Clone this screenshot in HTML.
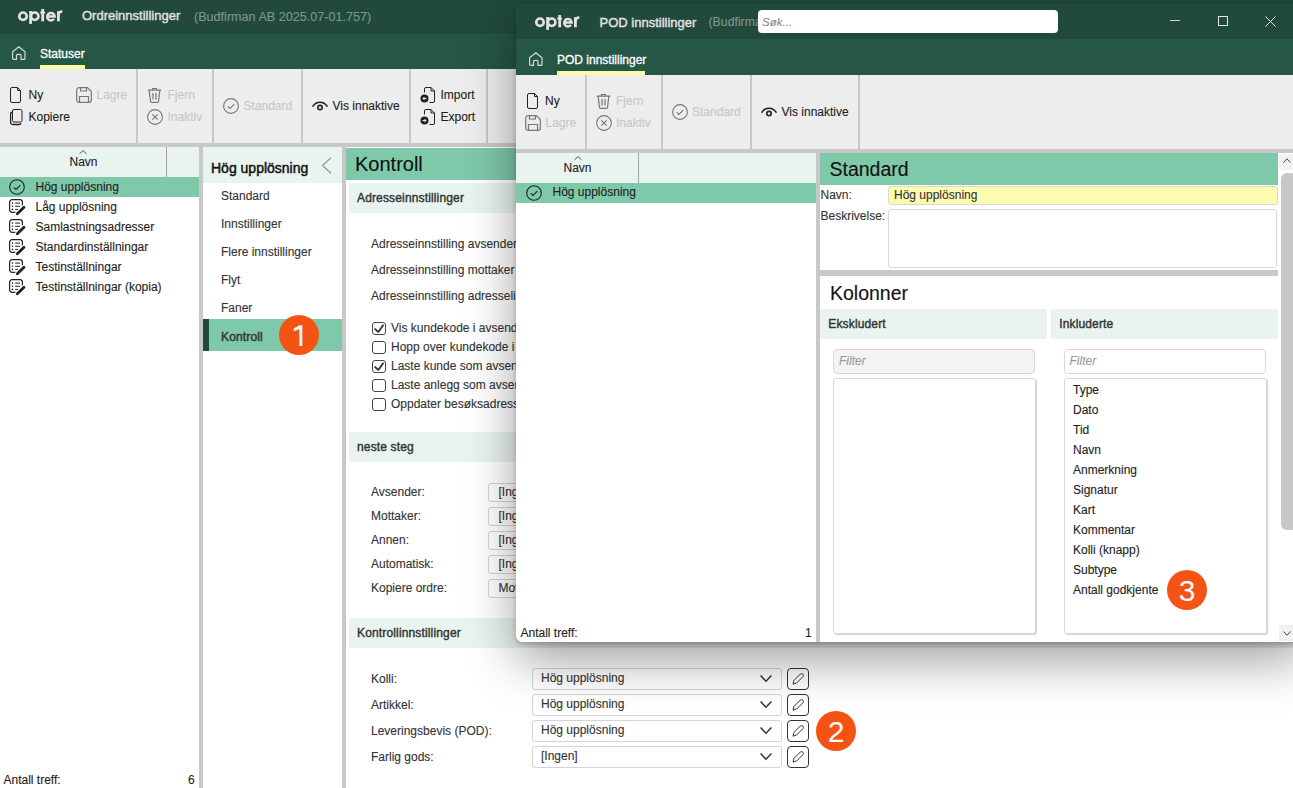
<!DOCTYPE html>
<html><head><meta charset="utf-8">
<style>
*{box-sizing:border-box;margin:0;padding:0}
html,body{width:1293px;height:788px;overflow:hidden;background:#fff;font-family:"Liberation Sans",sans-serif;font-size:12px;color:#1e1e1e}
.a{position:absolute}
.t{position:absolute;white-space:nowrap;line-height:16px;font-size:12px}
.b{font-weight:700}
.t{-webkit-text-stroke:0.12px currentColor}
.t.m{font-weight:400;-webkit-text-stroke:0.4px currentColor;letter-spacing:0.15px}
.sep{position:absolute;background:#c9c8c8}
.dis{color:#c8c8c8}
svg{position:absolute;overflow:visible}
.cb{position:absolute;width:14px;height:13px;border:1px solid #454545;border-radius:3px;background:#fff}
.dd{position:absolute;border:1px solid #d4d4d4;border-radius:3px;background:#fff}
.badge{position:absolute;width:40px;height:40px;border-radius:50%;background:#f55314;color:#fff;font-size:30px;line-height:42px;text-align:center}
</style></head><body>

<!-- ============ MAIN WINDOW ============ -->
<div class="a" style="left:0;top:0;width:1293px;height:34px;background:#214a3c"></div>
<svg style="left:14px;top:4px" width="56" height="26" viewBox="14 4 56 26"><g fill="none" stroke="#e5e2e2" stroke-width="2.6"><circle cx="23" cy="16.2" r="3.75"/><circle cx="34.7" cy="16.2" r="3.75"/><path d="M30.6 11v12.9" stroke-width="2.8"/><path d="M42.7 9v12.3" stroke-width="2.8"/><path d="M40.2 12.6h4.9" stroke-width="1.9"/><path d="M47.6 16.5h7.1A3.75 3.75 0 1 0 54 18.9" stroke-width="2.4"/><path d="M58.4 11.2v10.1" stroke-width="2.8"/><path d="M58.4 15.5Q58.6 11.6 62.3 11.6" stroke-width="2.5"/></g></svg>
<div class="t m" style="left:82px;top:8px;font-size:13px;color:#e2e2e2;-webkit-text-stroke:0.4px #e2e2e2;letter-spacing:0">Ordreinnstillinger</div>
<div class="t" style="left:194px;top:9px;font-size:12.6px;color:#7d978d">(Budfirman AB 2025.07-01.757)</div>

<div class="a" style="left:0;top:34px;width:1293px;height:35px;background:#255646"></div>
<svg style="left:12px;top:46px" width="14" height="14" viewBox="0 0 14 14"><path d="M4.5 13.4H1.6a1 1 0 0 1-1-1V5.7L6.8.7 13 5.7v6.7a1 1 0 0 1-1 1H9V9.4a1 1 0 0 0-1-1H5.5a1 1 0 0 0-1 1z" fill="none" stroke="#d4d8d6" stroke-width="1.2" stroke-linejoin="round"/></svg>
<div class="t" style="left:40px;top:46px;color:#fff;-webkit-text-stroke:0.3px #fff">Statuser</div>
<div class="a" style="left:40px;top:65px;width:45px;height:4px;background:#fbfaa6"></div>

<!-- toolbar -->
<div class="a" style="left:0;top:69px;width:1293px;height:74px;background:#ededed"></div>
<div class="sep" style="left:136px;top:69px;width:2px;height:74px"></div>
<div class="sep" style="left:212px;top:69px;width:2px;height:74px"></div>
<div class="sep" style="left:301px;top:69px;width:2px;height:74px"></div>
<div class="sep" style="left:409px;top:69px;width:2px;height:74px"></div>
<div class="sep" style="left:486px;top:69px;width:2px;height:74px"></div>

<!-- Ny -->
<svg style="left:10px;top:87px" width="11" height="16" viewBox="0 0 11 16"><path d="M2 .5h5.5L10.5 3.5V14a1.5 1.5 0 0 1-1.5 1.5H2A1.5 1.5 0 0 1 .5 14V2A1.5 1.5 0 0 1 2 .5z M7.5 .5V3.5h3" fill="none" stroke="#222" stroke-width="1"/></svg>
<div class="t" style="left:28.5px;top:86.5px">Ny</div>
<svg style="left:10px;top:109px" width="13" height="16" viewBox="0 0 13 16"><path d="M4 .5h6.5a1.5 1.5 0 0 1 1.5 1.5v9.5a1.5 1.5 0 0 1-1.5 1.5H4A1.5 1.5 0 0 1 2.5 11.5V2A1.5 1.5 0 0 1 4 .5z" fill="none" stroke="#222"/><path d="M2.3 3.2A1.5 1.5 0 0 0 .6 4.7V13.5A2 2 0 0 0 2.6 15.5H9.5A1.6 1.6 0 0 0 11 14.2" fill="none" stroke="#222" stroke-width="1.3"/></svg>
<div class="t" style="left:28.5px;top:109px">Kopiere</div>
<svg style="left:76px;top:87px" width="16" height="16" viewBox="0 0 16 16"><path d="M3 .7h8.5L15.3 4.5V13a2.3 2.3 0 0 1-2.3 2.3H3A2.3 2.3 0 0 1 .7 13V3A2.3 2.3 0 0 1 3 .7z M4.5 .7V4h6V.7 M3.5 15.3V9.5h9v5.8" fill="none" stroke="#777" stroke-width="1.2"/></svg>
<div class="t dis" style="left:96.5px;top:86.5px">Lagre</div>

<!-- Fjern / Inaktiv -->
<svg style="left:147px;top:87px" width="15" height="16" viewBox="0 0 15 16"><path d="M.8 3.2h13.4 M5.5 3V1.5h4V3 M2.2 3.5l1.3 11a1 1 0 0 0 1 .9h6a1 1 0 0 0 1-.9l1.3-11 M6 6v6.5 M9 6v6.5" fill="none" stroke="#777" stroke-width="1.2"/></svg>
<div class="t dis" style="left:167.5px;top:86.5px">Fjern</div>
<svg style="left:147px;top:109px" width="16" height="16" viewBox="0 0 16 16"><circle cx="8" cy="8" r="7.4" fill="none" stroke="#777" stroke-width="1.1"/><path d="M5.3 5.3l5.4 5.4M10.7 5.3l-5.4 5.4" stroke="#777" stroke-width="1.1"/></svg>
<div class="t dis" style="left:167.5px;top:109px">Inaktiv</div>

<!-- Standard -->
<svg style="left:223px;top:98px" width="16" height="16" viewBox="0 0 16 16"><circle cx="8" cy="8" r="7.4" fill="none" stroke="#777" stroke-width="1.1"/><path d="M4.8 8.3l2.2 2.1 4.3-4.3" fill="none" stroke="#777" stroke-width="1.1"/></svg>
<div class="t dis" style="left:243.5px;top:98px">Standard</div>

<!-- Vis innaktive -->
<svg style="left:312px;top:100px" width="16" height="11" viewBox="0 0 16 11"><path d="M1 6.2A8.2 8.2 0 0 1 15 6.2" fill="none" stroke="#222" stroke-width="1.6" stroke-linecap="round"/><circle cx="8" cy="7.6" r="2.2" fill="none" stroke="#222" stroke-width="1.6"/></svg>
<div class="t" style="left:332.5px;top:98px">Vis innaktive</div>

<!-- Import / Export -->
<svg style="left:420px;top:87px" width="15" height="16" viewBox="0 0 15 16"><path d="M4.5 5.5V2A1.5 1.5 0 0 1 6 .5h5L14.5 4v10a1.5 1.5 0 0 1-1.5 1.5H9.5 M11 .5V4h3.5" fill="none" stroke="#222"/><circle cx="4.5" cy="11.5" r="4" fill="#222"/><path d="M6.5 11.5h-3.5M4.6 9.9L3 11.5l1.6 1.6" fill="none" stroke="#eee" stroke-width="1"/></svg>
<div class="t" style="left:440.5px;top:86.5px">Import</div>
<svg style="left:420px;top:109px" width="15" height="16" viewBox="0 0 15 16"><path d="M4.5 5.5V2A1.5 1.5 0 0 1 6 .5h5L14.5 4v10a1.5 1.5 0 0 1-1.5 1.5H9.5 M11 .5V4h3.5" fill="none" stroke="#222"/><circle cx="4.5" cy="11.5" r="4" fill="#222"/><path d="M2.5 11.5h3.5M4.4 9.9L6 11.5l-1.6 1.6" fill="none" stroke="#eee" stroke-width="1"/></svg>
<div class="t" style="left:440.5px;top:109px">Export</div>

<!-- horizontal separator -->
<div class="a" style="left:0;top:143px;width:1293px;height:4px;background:#c9c8c8"></div>

<!-- left list -->
<div class="a" style="left:0;top:147px;width:199px;height:30px;background:#e9f3ef"></div>
<div class="sep" style="left:166px;top:147px;width:1px;height:30px;background:#a3a3a3"></div>
<svg style="left:79px;top:150px" width="8" height="4" viewBox="0 0 8 4"><path d="M.5 3.8L4 .6l3.5 3.2" fill="none" stroke="#444" stroke-width=".9"/></svg>
<div class="t" style="left:69.5px;top:154px;color:#222">Navn</div>
<div class="a" style="left:0;top:177px;width:199px;height:20px;background:#7ec9a9"></div>
<svg style="left:9px;top:179px" width="16" height="16" viewBox="0 0 16 16"><circle cx="8" cy="8" r="7.3" fill="none" stroke="#222" stroke-width="1.1"/><path d="M4.8 8.3l2.2 2.1 4.3-4.3" fill="none" stroke="#222" stroke-width="1.1"/></svg>
<div class="t" style="left:35.5px;top:179px">Hög upplösning</div>

<svg style="left:9px;top:199px" width="16" height="16" viewBox="0 0 16 16"><rect x="0.6" y="0.6" width="12.8" height="12.8" rx="2.6" fill="none" stroke="#222" stroke-width="1.2"/><circle cx="3.5" cy="4.1" r=".8" fill="#222"/><circle cx="3.5" cy="7.3" r=".8" fill="#222"/><circle cx="3.5" cy="10.4" r=".8" fill="#222"/><path d="M6.2 4.1h4.8M6.2 7.3h4.8M6.2 10.4h3" stroke="#222" stroke-width="1"/><path d="M15 8.2L8.3 14.8" stroke="#fff" stroke-width="5" stroke-linecap="round"/><path d="M15 8.2L8.3 14.8" stroke="#222" stroke-width="2.8" stroke-linecap="round"/></svg>
<svg style="left:9px;top:219px" width="16" height="16" viewBox="0 0 16 16"><rect x="0.6" y="0.6" width="12.8" height="12.8" rx="2.6" fill="none" stroke="#222" stroke-width="1.2"/><circle cx="3.5" cy="4.1" r=".8" fill="#222"/><circle cx="3.5" cy="7.3" r=".8" fill="#222"/><circle cx="3.5" cy="10.4" r=".8" fill="#222"/><path d="M6.2 4.1h4.8M6.2 7.3h4.8M6.2 10.4h3" stroke="#222" stroke-width="1"/><path d="M15 8.2L8.3 14.8" stroke="#fff" stroke-width="5" stroke-linecap="round"/><path d="M15 8.2L8.3 14.8" stroke="#222" stroke-width="2.8" stroke-linecap="round"/></svg>
<svg style="left:9px;top:239px" width="16" height="16" viewBox="0 0 16 16"><rect x="0.6" y="0.6" width="12.8" height="12.8" rx="2.6" fill="none" stroke="#222" stroke-width="1.2"/><circle cx="3.5" cy="4.1" r=".8" fill="#222"/><circle cx="3.5" cy="7.3" r=".8" fill="#222"/><circle cx="3.5" cy="10.4" r=".8" fill="#222"/><path d="M6.2 4.1h4.8M6.2 7.3h4.8M6.2 10.4h3" stroke="#222" stroke-width="1"/><path d="M15 8.2L8.3 14.8" stroke="#fff" stroke-width="5" stroke-linecap="round"/><path d="M15 8.2L8.3 14.8" stroke="#222" stroke-width="2.8" stroke-linecap="round"/></svg>
<svg style="left:9px;top:259px" width="16" height="16" viewBox="0 0 16 16"><rect x="0.6" y="0.6" width="12.8" height="12.8" rx="2.6" fill="none" stroke="#222" stroke-width="1.2"/><circle cx="3.5" cy="4.1" r=".8" fill="#222"/><circle cx="3.5" cy="7.3" r=".8" fill="#222"/><circle cx="3.5" cy="10.4" r=".8" fill="#222"/><path d="M6.2 4.1h4.8M6.2 7.3h4.8M6.2 10.4h3" stroke="#222" stroke-width="1"/><path d="M15 8.2L8.3 14.8" stroke="#fff" stroke-width="5" stroke-linecap="round"/><path d="M15 8.2L8.3 14.8" stroke="#222" stroke-width="2.8" stroke-linecap="round"/></svg>
<svg style="left:9px;top:279px" width="16" height="16" viewBox="0 0 16 16"><rect x="0.6" y="0.6" width="12.8" height="12.8" rx="2.6" fill="none" stroke="#222" stroke-width="1.2"/><circle cx="3.5" cy="4.1" r=".8" fill="#222"/><circle cx="3.5" cy="7.3" r=".8" fill="#222"/><circle cx="3.5" cy="10.4" r=".8" fill="#222"/><path d="M6.2 4.1h4.8M6.2 7.3h4.8M6.2 10.4h3" stroke="#222" stroke-width="1"/><path d="M15 8.2L8.3 14.8" stroke="#fff" stroke-width="5" stroke-linecap="round"/><path d="M15 8.2L8.3 14.8" stroke="#222" stroke-width="2.8" stroke-linecap="round"/></svg>
<div class="t" style="left:35.5px;top:199px">Låg upplösning</div>
<div class="t" style="left:35.5px;top:219px">Samlastningsadresser</div>
<div class="t" style="left:35.5px;top:239px">Standardinställningar</div>
<div class="t" style="left:35.5px;top:259px">Testinställningar</div>
<div class="t" style="left:35.5px;top:279px">Testinställningar (kopia)</div>

<div class="t" style="left:3.5px;top:772px">Antall treff:</div>
<div class="t" style="left:188px;top:772px">6</div>

<div class="a" style="left:199px;top:147px;width:4px;height:641px;background:#c9c8c8"></div>

<!-- nav panel -->
<div class="a" style="left:203px;top:147px;width:139px;height:35.5px;background:#e9f3ef"></div>
<div class="t m" style="left:211px;top:160px;font-size:14px;color:#111;-webkit-text-stroke:0.45px #111;letter-spacing:0">Hög upplösning</div>
<svg style="left:321px;top:157px" width="11" height="17" viewBox="0 0 11 17"><path d="M10 .8L1.5 8.5 10 16.2" fill="none" stroke="#8aa59b" stroke-width="1.4"/></svg>
<div class="t" style="left:221px;top:188px;color:#333">Standard</div>
<div class="t" style="left:221px;top:216px;color:#333">Innstillinger</div>
<div class="t" style="left:221px;top:244px;color:#333">Flere innstillinger</div>
<div class="t" style="left:221px;top:272px;color:#333">Flyt</div>
<div class="t" style="left:221px;top:300px;color:#333">Faner</div>
<div class="a" style="left:203px;top:319px;width:139px;height:32px;background:#7ec9a9"></div>
<div class="a" style="left:203px;top:319px;width:6px;height:32px;background:#1f4a3c"></div>
<div class="t m" style="left:221px;top:328.5px;color:#383838;-webkit-text-stroke:0.5px #383838">Kontroll</div>

<div class="a" style="left:342px;top:147px;width:4px;height:641px;background:#c9c8c8"></div>

<!-- content -->
<div class="a" style="left:346px;top:148px;width:947px;height:32px;background:#7ec9a9"></div>
<div class="t" style="left:355px;top:152px;font-size:20px;line-height:24px;color:#111">Kontroll</div>

<div class="a" style="left:349px;top:183px;width:944px;height:30px;background:#e9f3ef"></div>
<div class="t m" style="left:357px;top:190px;color:#333">Adresseinnstillinger</div>
<div class="t" style="left:371px;top:236px;color:#333">Adresseinnstilling avsender</div>
<div class="t" style="left:371px;top:262px;color:#333">Adresseinnstilling mottaker</div>
<div class="t" style="left:371px;top:288px;color:#333">Adresseinnstilling adresselinje</div>

<div class="cb" style="left:372px;top:322px"></div>
<div class="cb" style="left:372px;top:341px"></div>
<div class="cb" style="left:372px;top:360px"></div>
<div class="cb" style="left:372px;top:379px"></div>
<div class="cb" style="left:372px;top:398px"></div>
<svg style="left:372px;top:322px" width="14" height="13" viewBox="0 0 14 13"><path d="M2.6 6.6l3.8 3.4 5-7.2" fill="none" stroke="#333" stroke-width="1.9" stroke-linejoin="bevel"/></svg>
<svg style="left:372px;top:360px" width="14" height="13" viewBox="0 0 14 13"><path d="M2.6 6.6l3.8 3.4 5-7.2" fill="none" stroke="#333" stroke-width="1.9" stroke-linejoin="bevel"/></svg>
<div class="t" style="left:391px;top:320px;color:#333">Vis kundekode i avsender</div>
<div class="t" style="left:391px;top:339px;color:#333">Hopp over kundekode i</div>
<div class="t" style="left:391px;top:358px;color:#333">Laste kunde som avsender</div>
<div class="t" style="left:391px;top:377px;color:#333">Laste anlegg som avsender</div>
<div class="t" style="left:391px;top:396px;color:#333">Oppdater besøksadresse</div>

<div class="a" style="left:349px;top:432px;width:944px;height:30px;background:#e9f3ef"></div>
<div class="t m" style="left:357px;top:439px;color:#333">neste steg</div>
<div class="t" style="left:371px;top:484px;color:#333">Avsender:</div>
<div class="t" style="left:371px;top:508px;color:#333">Mottaker:</div>
<div class="t" style="left:371px;top:532px;color:#333">Annen:</div>
<div class="t" style="left:371px;top:556px;color:#333">Automatisk:</div>
<div class="t" style="left:371px;top:580px;color:#333">Kopiere ordre:</div>
<div class="dd" style="left:488px;top:483px;width:200px;height:19px"></div>
<div class="dd" style="left:488px;top:507px;width:200px;height:19px"></div>
<div class="dd" style="left:488px;top:531px;width:200px;height:19px"></div>
<div class="dd" style="left:488px;top:555px;width:200px;height:19px"></div>
<div class="dd" style="left:488px;top:579px;width:200px;height:19px"></div>
<div class="t" style="left:498.5px;top:484px;color:#333">[Ingen]</div>
<div class="t" style="left:498.5px;top:508px;color:#333">[Ingen]</div>
<div class="t" style="left:498.5px;top:532px;color:#333">[Ingen]</div>
<div class="t" style="left:498.5px;top:556px;color:#333">[Ingen]</div>
<div class="t" style="left:498.5px;top:580px;color:#333">Mottaker</div>

<div class="a" style="left:349px;top:618px;width:944px;height:30px;background:#e9f3ef"></div>
<div class="t m" style="left:357px;top:625px;color:#333">Kontrollinnstillinger</div>
<div class="t" style="left:371px;top:671px;color:#333">Kolli:</div>
<div class="t" style="left:371px;top:697px;color:#333">Artikkel:</div>
<div class="t" style="left:371px;top:723px;color:#333">Leveringsbevis (POD):</div>
<div class="t" style="left:371px;top:749px;color:#333">Farlig gods:</div>

<div class="dd" style="left:531.5px;top:668px;width:250px;height:22px"></div>
<div class="t" style="left:541px;top:670px;color:#333">Hög upplösning</div>
<svg style="left:760px;top:675px" width="12" height="7" viewBox="0 0 12 7"><path d="M.6 .6L6 6.2 11.4 .6" fill="none" stroke="#333" stroke-width="1.5"/></svg>
<div class="a" style="left:787px;top:668px;width:22px;height:22px;border:1.3px solid #333;border-radius:4px"></div>
<svg style="left:787px;top:668px" width="22" height="22" viewBox="0 0 22 22"><path d="M6 16.2L7 12.4 13.4 6A1.85 1.85 0 0 1 16 8.6L9.6 15z" fill="none" stroke="#333" stroke-width="1" stroke-linejoin="round"/></svg>
<div class="dd" style="left:531.5px;top:694px;width:250px;height:22px"></div>
<div class="t" style="left:541px;top:696px;color:#333">Hög upplösning</div>
<svg style="left:760px;top:701px" width="12" height="7" viewBox="0 0 12 7"><path d="M.6 .6L6 6.2 11.4 .6" fill="none" stroke="#333" stroke-width="1.5"/></svg>
<div class="a" style="left:787px;top:694px;width:22px;height:22px;border:1.3px solid #333;border-radius:4px"></div>
<svg style="left:787px;top:694px" width="22" height="22" viewBox="0 0 22 22"><path d="M6 16.2L7 12.4 13.4 6A1.85 1.85 0 0 1 16 8.6L9.6 15z" fill="none" stroke="#333" stroke-width="1" stroke-linejoin="round"/></svg>
<div class="dd" style="left:531.5px;top:720px;width:250px;height:22px"></div>
<div class="t" style="left:541px;top:722px;color:#333">Hög upplösning</div>
<svg style="left:760px;top:727px" width="12" height="7" viewBox="0 0 12 7"><path d="M.6 .6L6 6.2 11.4 .6" fill="none" stroke="#333" stroke-width="1.5"/></svg>
<div class="a" style="left:787px;top:720px;width:22px;height:22px;border:1.3px solid #333;border-radius:4px"></div>
<svg style="left:787px;top:720px" width="22" height="22" viewBox="0 0 22 22"><path d="M6 16.2L7 12.4 13.4 6A1.85 1.85 0 0 1 16 8.6L9.6 15z" fill="none" stroke="#333" stroke-width="1" stroke-linejoin="round"/></svg>
<div class="dd" style="left:531.5px;top:746px;width:250px;height:22px"></div>
<div class="t" style="left:541px;top:748px;color:#333">[Ingen]</div>
<svg style="left:760px;top:753px" width="12" height="7" viewBox="0 0 12 7"><path d="M.6 .6L6 6.2 11.4 .6" fill="none" stroke="#333" stroke-width="1.5"/></svg>
<div class="a" style="left:787px;top:746px;width:22px;height:22px;border:1.3px solid #333;border-radius:4px"></div>
<svg style="left:787px;top:746px" width="22" height="22" viewBox="0 0 22 22"><path d="M6 16.2L7 12.4 13.4 6A1.85 1.85 0 0 1 16 8.6L9.6 15z" fill="none" stroke="#333" stroke-width="1" stroke-linejoin="round"/></svg>

<div class="badge" style="left:279px;top:315px"></div><svg style="left:279px;top:315px" width="40" height="40" viewBox="0 0 40 40"><path d="M20.4 10.2h2.9V31h-2.9V14.1l-5.6 2.1v-2.7z" fill="#fff"/></svg>
<div class="badge" style="left:816px;top:710.5px">2</div>

<!-- ============ POD WINDOW ============ -->
<div class="a" id="pod" style="left:516px;top:4px;width:790px;height:638px;border-radius:7px;box-shadow:0 2px 5px rgba(0,0,0,0.22),0 18px 50px rgba(0,0,0,0.38);background:linear-gradient(#214a3c 0 30px,#fff 30px)"></div>
<div class="a" style="left:516px;top:4px;width:777px;height:35px;background:#214a3c;border-top-left-radius:7px"></div>
<svg style="left:531px;top:10px" width="56" height="26" viewBox="14 4 56 26"><g fill="none" stroke="#e5e2e2" stroke-width="2.6"><circle cx="23" cy="16.2" r="3.75"/><circle cx="34.7" cy="16.2" r="3.75"/><path d="M30.6 11v12.9" stroke-width="2.8"/><path d="M42.7 9v12.3" stroke-width="2.8"/><path d="M40.2 12.6h4.9" stroke-width="1.9"/><path d="M47.6 16.5h7.1A3.75 3.75 0 1 0 54 18.9" stroke-width="2.4"/><path d="M58.4 11.2v10.1" stroke-width="2.8"/><path d="M58.4 15.5Q58.6 11.6 62.3 11.6" stroke-width="2.5"/></g></svg>
<div class="t m" style="left:599.5px;top:14.5px;font-size:13px;color:#e2e2e2;-webkit-text-stroke:0.4px #e2e2e2;letter-spacing:0">POD innstillinger</div>
<div class="t" style="left:708.5px;top:14px;font-size:12.3px;color:#7d978d">(Budfirman AB 2025.07-01.757)</div>
<div class="a" style="left:758px;top:10px;width:300px;height:23px;background:#fff;border-radius:4px"></div>
<div class="t" style="left:762px;top:14px;font-size:11.5px;font-style:italic;color:#8a8a8a">Søk...</div>
<div class="a" style="left:1170px;top:20px;width:10px;height:1px;background:#d6d6d6"></div>
<div class="a" style="left:1218px;top:16px;width:10px;height:10px;border:1px solid #e6e6e6"></div>
<svg style="left:1265px;top:16px" width="11" height="11" viewBox="0 0 11 11"><path d="M.5 .5l10 10M10.5 .5l-10 10" stroke="#e6e6e6" stroke-width="1"/></svg>

<div class="a" style="left:516px;top:39px;width:777px;height:36px;background:#255646"></div>
<svg style="left:528.5px;top:52px" width="14" height="14" viewBox="0 0 14 14"><path d="M4.5 13.4H1.6a1 1 0 0 1-1-1V5.7L6.8.7 13 5.7v6.7a1 1 0 0 1-1 1H9V9.4a1 1 0 0 0-1-1H5.5a1 1 0 0 0-1 1z" fill="none" stroke="#d4d8d6" stroke-width="1.2" stroke-linejoin="round"/></svg>
<div class="t" style="left:557px;top:52px;color:#fff;-webkit-text-stroke:0.3px #fff">POD innstillinger</div>
<div class="a" style="left:557px;top:71px;width:88px;height:4px;background:#fbfaa6"></div>

<div class="a" style="left:516px;top:75px;width:777px;height:74px;background:#ededed"></div>
<div class="sep" style="left:585px;top:75px;width:2px;height:74px"></div>
<div class="sep" style="left:661px;top:75px;width:2px;height:74px"></div>
<div class="sep" style="left:750px;top:75px;width:2px;height:74px"></div>
<div class="sep" style="left:858px;top:75px;width:2px;height:74px"></div>

<svg style="left:527px;top:93px" width="11" height="16" viewBox="0 0 11 16"><path d="M2 .5h5.5L10.5 3.5V14a1.5 1.5 0 0 1-1.5 1.5H2A1.5 1.5 0 0 1 .5 14V2A1.5 1.5 0 0 1 2 .5z M7.5 .5V3.5h3" fill="none" stroke="#222" stroke-width="1"/></svg>
<div class="t" style="left:545px;top:93px">Ny</div>
<svg style="left:525px;top:115px" width="16" height="16" viewBox="0 0 16 16"><path d="M3 .7h8.5L15.3 4.5V13a2.3 2.3 0 0 1-2.3 2.3H3A2.3 2.3 0 0 1 .7 13V3A2.3 2.3 0 0 1 3 .7z M4.5 .7V4h6V.7 M3.5 15.3V9.5h9v5.8" fill="none" stroke="#777" stroke-width="1.2"/></svg>
<div class="t dis" style="left:545.5px;top:115px">Lagre</div>
<svg style="left:596px;top:93px" width="15" height="16" viewBox="0 0 15 16"><path d="M.8 3.2h13.4 M5.5 3V1.5h4V3 M2.2 3.5l1.3 11a1 1 0 0 0 1 .9h6a1 1 0 0 0 1-.9l1.3-11 M6 6v6.5 M9 6v6.5" fill="none" stroke="#777" stroke-width="1.2"/></svg>
<div class="t dis" style="left:616px;top:93px">Fjern</div>
<svg style="left:596px;top:115px" width="16" height="16" viewBox="0 0 16 16"><circle cx="8" cy="8" r="7.4" fill="none" stroke="#777" stroke-width="1.1"/><path d="M5.3 5.3l5.4 5.4M10.7 5.3l-5.4 5.4" stroke="#777" stroke-width="1.1"/></svg>
<div class="t dis" style="left:616px;top:115px">Inaktiv</div>
<svg style="left:672px;top:104px" width="16" height="16" viewBox="0 0 16 16"><circle cx="8" cy="8" r="7.4" fill="none" stroke="#777" stroke-width="1.1"/><path d="M4.8 8.3l2.2 2.1 4.3-4.3" fill="none" stroke="#777" stroke-width="1.1"/></svg>
<div class="t dis" style="left:692px;top:104px">Standard</div>
<svg style="left:761px;top:106px" width="16" height="11" viewBox="0 0 16 11"><path d="M1 6.2A8.2 8.2 0 0 1 15 6.2" fill="none" stroke="#222" stroke-width="1.6" stroke-linecap="round"/><circle cx="8" cy="7.6" r="2.2" fill="none" stroke="#222" stroke-width="1.6"/></svg>
<div class="t" style="left:781.5px;top:104px">Vis innaktive</div>

<div class="a" style="left:516px;top:149px;width:777px;height:4px;background:#c9c8c8"></div>

<div class="a" style="left:516px;top:153px;width:300px;height:30px;background:#e9f3ef"></div>
<div class="sep" style="left:638px;top:153px;width:1px;height:30px;background:#a3a3a3"></div>
<svg style="left:573.5px;top:156px" width="8" height="4" viewBox="0 0 8 4"><path d="M.5 3.8L4 .6l3.5 3.2" fill="none" stroke="#444" stroke-width=".9"/></svg>
<div class="t" style="left:563.5px;top:160px;color:#222">Navn</div>
<div class="a" style="left:516px;top:183px;width:300px;height:20px;background:#7ec9a9"></div>
<svg style="left:526px;top:185px" width="16" height="16" viewBox="0 0 16 16"><circle cx="8" cy="8" r="7.3" fill="none" stroke="#222" stroke-width="1.1"/><path d="M4.8 8.3l2.2 2.1 4.3-4.3" fill="none" stroke="#222" stroke-width="1.1"/></svg>
<div class="t" style="left:552.5px;top:184px">Hög upplösning</div>
<div class="t" style="left:520.5px;top:625px">Antall treff:</div>
<div class="t" style="left:805px;top:625px">1</div>

<div class="a" style="left:816px;top:153px;width:4px;height:489px;background:#c9c8c8"></div>

<div class="a" style="left:820px;top:153px;width:458px;height:32px;background:#7ec9a9"></div>
<div class="t" style="left:829.5px;top:157px;font-size:19.5px;line-height:24px;color:#111">Standard</div>
<div class="t" style="left:820.5px;top:187px;color:#333">Navn:</div>
<div class="a" style="left:888px;top:185.5px;width:389.5px;height:19px;background:#fdfdb2;border:1px solid #d9d9d0;border-radius:3px"></div>
<div class="t" style="left:894px;top:187px;color:#333">Hög upplösning</div>
<div class="t" style="left:820.5px;top:208px;color:#333">Beskrivelse:</div>
<div class="a" style="left:888px;top:209px;width:389px;height:59px;background:#fff;border:1px solid #d8d8d8;border-radius:3px"></div>
<div class="a" style="left:820px;top:270px;width:458px;height:6px;background:#c9c8c8"></div>
<div class="t" style="left:830px;top:281px;font-size:19.5px;line-height:24px;color:#111">Kolonner</div>
<div class="a" style="left:820px;top:309px;width:227px;height:30px;background:#e9f3ef"></div>
<div class="a" style="left:1051px;top:309px;width:227px;height:30px;background:#e9f3ef"></div>
<div class="t m" style="left:828.3px;top:316px;color:#333">Ekskludert</div>
<div class="t m" style="left:1059.2px;top:316px;color:#333">Inkluderte</div>
<div class="a" style="left:832.5px;top:349px;width:202.5px;height:24.5px;background:#f3f3f3;border:1px solid #d8d8d8;border-radius:4px"></div>
<div class="a" style="left:1063.5px;top:349px;width:202.5px;height:24.5px;background:#fff;border:1px solid #d8d8d8;border-radius:4px"></div>
<div class="t" style="left:839px;top:353px;font-style:italic;color:#9a9a9a">Filter</div>
<div class="t" style="left:1069.5px;top:353px;font-style:italic;color:#9a9a9a">Filter</div>
<div class="a" style="left:832.5px;top:378px;width:203px;height:256px;background:#fff;border:1px solid #d8d8d8;border-radius:3px;box-shadow:1px 1px 1px rgba(0,0,0,.18)"></div>
<div class="a" style="left:1063.5px;top:378px;width:203px;height:256px;background:#fff;border:1px solid #d8d8d8;border-radius:3px;box-shadow:1px 1px 1px rgba(0,0,0,.18)"></div>
<div class="t" style="left:1073px;top:382px">Type</div>
<div class="t" style="left:1073px;top:402px">Dato</div>
<div class="t" style="left:1073px;top:422px">Tid</div>
<div class="t" style="left:1073px;top:442px">Navn</div>
<div class="t" style="left:1073px;top:462px">Anmerkning</div>
<div class="t" style="left:1073px;top:482px">Signatur</div>
<div class="t" style="left:1073px;top:502px">Kart</div>
<div class="t" style="left:1073px;top:522px">Kommentar</div>
<div class="t" style="left:1073px;top:542px">Kolli (knapp)</div>
<div class="t" style="left:1073px;top:562px">Subtype</div>
<div class="t" style="left:1073px;top:582px">Antall godkjente</div>

<div class="a" style="left:1279px;top:153.5px;width:14px;height:16px;background:#f1f1f1"></div>
<svg style="left:1283px;top:158px" width="8" height="5" viewBox="0 0 8 5"><path d="M.5 4.5L4 .8l3.5 3.7" fill="none" stroke="#444" stroke-width="1"/></svg>
<div class="a" style="left:1281px;top:173px;width:16px;height:357px;background:#c8c6c6;border-radius:6px"></div>
<div class="a" style="left:1279px;top:625px;width:14px;height:16px;background:#f1f1f1"></div>
<svg style="left:1283px;top:631px" width="8" height="5" viewBox="0 0 8 5"><path d="M.5 .5L4 4.2l3.5-3.7" fill="none" stroke="#444" stroke-width="1"/></svg>

<div class="badge" style="left:1167px;top:570px">3</div>

</body></html>
